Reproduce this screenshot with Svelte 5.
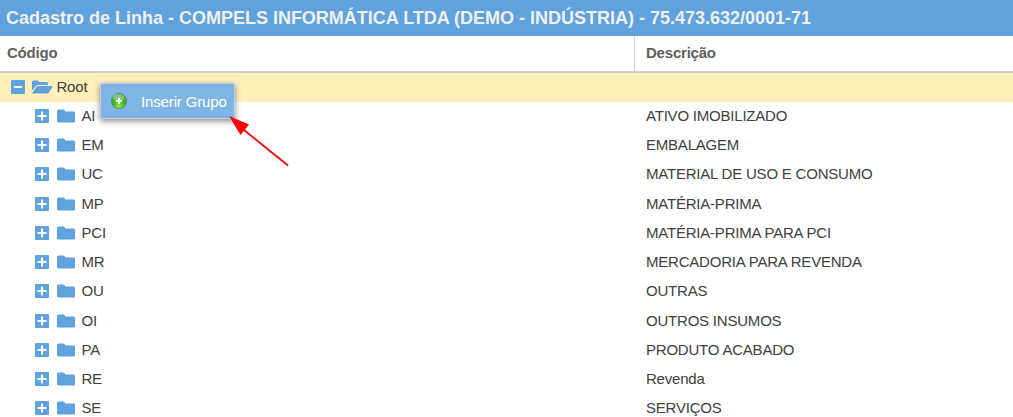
<script>
	const title = 'Cadastro de Linha - COMPELS INFORMÁTICA LTDA (DEMO - INDÚSTRIA) - 75.473.632/0001-71';

	const groups = [
		{ code: 'AI', description: 'ATIVO IMOBILIZADO' },
		{ code: 'EM', description: 'EMBALAGEM' },
		{ code: 'UC', description: 'MATERIAL DE USO E CONSUMO' },
		{ code: 'MP', description: 'MATÉRIA-PRIMA' },
		{ code: 'PCI', description: 'MATÉRIA-PRIMA PARA PCI' },
		{ code: 'MR', description: 'MERCADORIA PARA REVENDA' },
		{ code: 'OU', description: 'OUTRAS' },
		{ code: 'OI', description: 'OUTROS INSUMOS' },
		{ code: 'PA', description: 'PRODUTO ACABADO' },
		{ code: 'RE', description: 'Revenda' },
		{ code: 'SE', description: 'SERVIÇOS' }
	];
</script>

<div class="panel">
	<header class="title"><span>{title}</span></header>

	<div class="columns">
		<div class="column code">Código</div>
		<div class="column">Descrição</div>
	</div>

	<div class="tree" role="tree">
		<div class="row selected" role="treeitem" aria-selected="true">
			<div class="cell code">
				<svg class="expander" viewBox="0 0 14 14">
					<rect width="14" height="14" rx="1" />
					<path class="sign" d="M3 7h8" />
				</svg>
				<svg class="folder open" viewBox="0 0 21 14">
					<path d="M0 10.500V2Q0 .5 1.500 .5H5.500Q7 .5 7.200 2H14.500Q16 2 16 3.500V5H6Q4.600 5 3.800 6Z" />
					<path d="M6 6H20Q21 6 20.400 7L17 12.500Q16.200 13.500 15 13.500H1Q0 13.500 .6 12.500L4.200 7Q5 6 6 6Z" />
				</svg>
				<span>Root</span>
			</div>
		</div>
		{#each groups as group}
			<div class="row child" role="treeitem" aria-selected="false">
				<div class="cell code">
					<svg class="expander" viewBox="0 0 14 14">
						<rect width="14" height="14" rx="1" />
						<path class="sign" d="M2.500 7h9M7 2.500v9" />
					</svg>
					<svg class="folder" viewBox="0 0 18 14">
						<path d="M0 2Q0 .5 1.500 .5H6.500Q7.800 .5 8.200 2.500H16.500Q18 2.500 18 4V12Q18 13.500 16.500 13.500H1.500Q0 13.500 0 12Z" />
					</svg>
					<span>{group.code}</span>
				</div>
				<div class="cell description">{group.description}</div>
			</div>
		{/each}
	</div>

	<div class="menu" role="menu">
		<svg class="add" viewBox="0 0 16 16">
			<defs>
				<radialGradient id="green" cx="50%" cy="90%" r="85%">
					<stop offset="0" stop-color="#8ff04a" />
					<stop offset=".5" stop-color="#40b524" />
					<stop offset="1" stop-color="#4f9c48" />
				</radialGradient>
			</defs>
			<circle cx="8" cy="8" r="7.500" fill="url(#green)" stroke="#3f8c38" stroke-width=".7" />
			<ellipse cx="7.500" cy="4.500" rx="5.500" ry="3.400" fill="#fff" opacity=".35" />
			<path d="M5 8h6M8 5v6" stroke="#fff" stroke-width="2" />
		</svg>
		<span>Inserir Grupo</span>
	</div>

	<svg class="arrow" viewBox="0 0 62 52">
		<path d="M16 14L60 49.500" stroke="#f00" stroke-width="1.800" />
		<path d="M1 0L21 8.500L12.500 19Z" fill="#f00" />
	</svg>
</div>

<style>
	:global(body) {
		margin: 0;
		background: #fff;
	}

	.panel {
		position: relative;
		width: 1013px;
		height: 417px;
		overflow: hidden;
		font: 15px "Liberation Sans", Arial, sans-serif;
		letter-spacing: -0.21px;
		color: #404040;
		white-space: nowrap;
	}

	.title {
		height: 36px;
		padding-left: 6px;
		box-sizing: border-box;
		background: #5fa2dd;
		color: #f0f0f0;
		font-size: 18px;
		font-weight: bold;
		letter-spacing: -0.005px;
		line-height: 37px;
	}

	.columns {
		display: flex;
		height: 35px;
		border-bottom: 2px solid #d0d0d0;
		color: #606060;
		font-weight: bold;
		line-height: 34px;
	}
	.column {
		padding-left: 11px;
	}
	.column.code {
		width: 635px;
		padding-left: 7px;
		box-sizing: border-box;
		border-right: 1px solid #d0d0d0;
		flex: none;
	}

	.row {
		display: flex;
		height: 29.25px;
		line-height: 27px;
	}
	.row.selected {
		height: 29px;
		background: #ffefbb;
	}
	.cell {
		padding-left: 11px;
	}
	.cell.description {
		margin-top: -0.25px;
	}
	.cell.code {
		display: flex;
		align-items: center;
		flex: none;
		width: 635px;
		height: 27.5px;
		padding-left: 11px;
		box-sizing: border-box;
	}
	.cell span {
		margin-bottom: 1px;
	}
	.selected .cell.code {
		height: 27px;
	}
	.selected span {
		margin-bottom: 0;
	}
	.child .code {
		padding-left: 35px;
	}

	.expander {
		width: 14px;
		height: 14px;
		margin-right: 8px;
		fill: #5fa2dd;
	}
	.sign {
		fill: none;
		stroke: #fff;
		stroke-width: 2;
	}
	.folder {
		width: 18px;
		height: 14px;
		margin-right: 6.5px;
		fill: #5fa2dd;
	}
	.folder.open {
		width: 21px;
		margin-left: -1px;
		margin-right: 3.5px;
	}

	.menu {
		position: absolute;
		top: 83px;
		left: 100px;
		display: flex;
		align-items: center;
		width: 135px;
		height: 36px;
		padding-left: 10px;
		box-sizing: border-box;
		border: 1px solid #c6cdd4;
		background: #7fb5e4;
		box-shadow: 0 2px 6px #888;
		color: #fff;
		letter-spacing: -0.14px;
	}
	.add {
		width: 16px;
		height: 16px;
		margin-right: 14px;
	}

	.arrow {
		position: absolute;
		top: 116px;
		left: 228px;
		width: 62px;
		height: 52px;
	}
</style>
